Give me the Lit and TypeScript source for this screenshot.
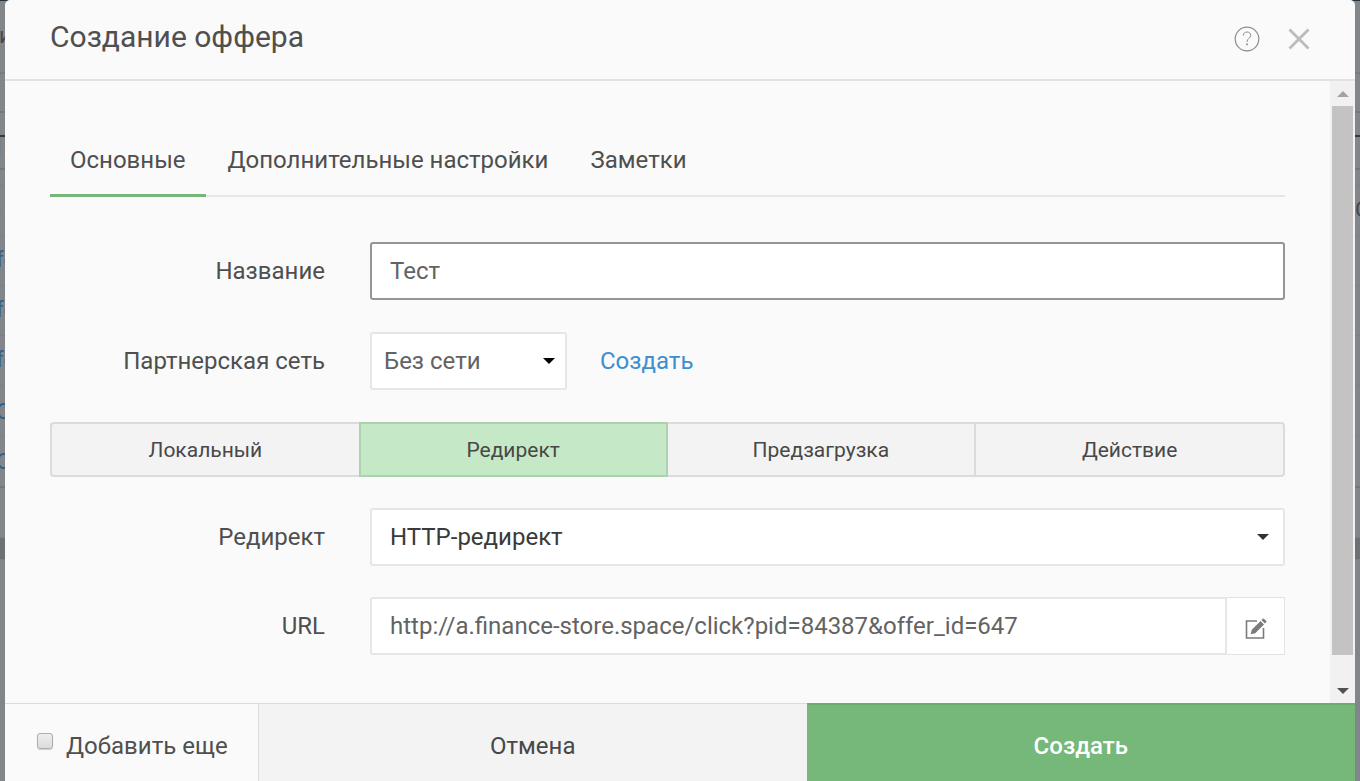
import { LitElement, html, css, svg } from "lit";
import { customElement, state } from "lit/decorators.js";

const caret = html`<svg class="caret" viewBox="0 0 12 6" width="12" height="6" aria-hidden="true">
  ${svg`<path d="M0 0h12L6 6z" fill="currentColor" />`}
</svg>`;

/** Table rows of the page that stays dimmed behind the dialog. */
const backdropRows = [
  { cls: "top", left: "и", right: "" },
  { cls: "nav", left: "", right: "" },
  { cls: "tools", left: "", right: "" },
  { cls: "tab", left: "П", right: "" },
  { cls: "gap", left: "", right: "" },
  { cls: "head", left: "е", right: "С" },
  { cls: "row", left: "fe", right: "" },
  { cls: "row", left: "fe", right: "" },
  { cls: "row", left: "fe", right: "" },
  { cls: "row round", left: "O", right: "" },
  { cls: "row round last", left: "O", right: "" },
  { cls: "sum", left: "", right: "" },
  { cls: "total", left: "", right: "" },
];

@customElement("page-backdrop")
export class PageBackdrop extends LitElement {
  static styles = css`
    :host {
      display: block;
      height: 100%;
      overflow: hidden;
      background: #82868a;
      color: #45474a;
      font: 22px/24px Roboto, sans-serif;
      border-top: 1px solid #263340;
      box-sizing: border-box;
    }
    .line {
      display: flex;
      align-items: center;
      justify-content: space-between;
      box-sizing: border-box;
      height: 50px;
      padding-bottom: 2px;
      border-bottom: 1px solid #7c8084;
      color: #33608a;
    }
    .line span { margin-left: -4px; white-space: nowrap; }
    .round { padding: 2px 0 0; }
    .line .end { width: 5px; overflow: hidden; color: #45474a; }
    .top { height: 73px; color: #45474a; border-bottom: 2px solid #787c80; }
    .top span { margin-left: -1px; }
    .nav { height: 39px; border-bottom: 2px solid #74787c; }
    .tools { height: 24px; border-bottom: 2px solid #33373b; }
    .tab { height: 33px; border-bottom: 2px solid #74787c; align-items: flex-start; }
    .tab span { margin-left: -14px; }
    .gap { height: 16px; }
    .head { color: #66696d; }
    .head span { margin-left: -11px; }
    .last { height: 52px; border-bottom: 2px solid #74787c; }
    .sum { height: 50px; }
    .total { height: 22px; background: #6e7174; }
  `;

  render() {
    return backdropRows.map(
      (r) => html`<div class="line ${r.cls}"><span>${r.left}</span><div class="end">${r.right}</div></div>`
    );
  }
}

@customElement("app-root")
export class AppRoot extends LitElement {
  static styles = css`
    :host {
      display: block;
      position: relative;
      height: 100vh;
      overflow: hidden;
      font: 24px/32px Roboto, sans-serif;
      color: #4f4f4f;
    }
    *, *::before, *::after { box-sizing: border-box; }
    button, input, select { font: inherit; color: inherit; margin: 0; }
    button { cursor: pointer; }

    .dialog {
      position: absolute;
      inset: 0 5px;
      display: flex;
      flex-direction: column;
      background: #fafafa;
      border-radius: 5px 5px 0 0;
      overflow: hidden;
    }

    .header {
      display: flex;
      align-items: center;
      gap: 28px;
      padding: 16px 45px 21px;
      border-bottom: 2px solid #e2e2e2;
    }
    .title { flex: 1; margin: 0; font-size: 30px; line-height: 42px; font-weight: 400; }
    .icon-button { display: flex; padding: 4px 0 0; border: 0; background: none; color: #bcbcbc; }
    .help { color: #8c8c8c; }

    .body { flex: 1; min-height: 0; display: flex; }
    .content { flex: 1; min-width: 0; padding: 46px 45px 0; overflow: hidden; }

    .tabs { display: flex; gap: 2px; box-shadow: inset 0 -2px #e6e6e6; height: 70px; }
    .tab {
      padding: 0 20px 2px;
      border: 0;
      border-bottom: 3px solid transparent;
      background: none;
    }
    .tab.active { border-bottom-color: #74b779; }

    .form { display: grid; gap: 31px; margin-top: 45px; }
    .group { display: grid; gap: 32px; }
    .row {
      display: grid;
      grid-template-columns: 275px minmax(0, 1fr);
      column-gap: 45px;
      align-items: center;
    }
    .row > label { text-align: right; }
    .box {
      width: 100%;
      height: 58px;
      padding: 0 18px;
      border: 2px solid #e6e6e6;
      border-radius: 3px;
      background: #fff;
      color: #636363;
      outline: none;
    }
    .box.strong { border-color: #959595; }
    .inline { display: flex; align-items: center; gap: 33px; }
    .select { display: grid; align-items: center; }
    .select > * { grid-area: 1 / 1; }
    .select .box { appearance: none; color: #3a3a3a; }
    .select .caret { justify-self: end; margin-right: 16px; pointer-events: none; color: #333; }
    .network { width: 197px; }
    .network .box { padding: 0 12px; color: #636363; }
    .network .caret { margin-right: 12px; color: #000; }
    .link { color: #3d8fd1; text-decoration: none; }

    .segments { display: grid; grid-template-columns: repeat(4, 1fr); font-size: 21px; color: #484848; }
    .segment {
      height: 55px;
      border: 2px solid #dbdbdb;
      border-left-width: 0;
      background: #f3f3f3;
    }
    .segment:first-child { border-left-width: 2px; border-right-width: 0; border-radius: 4px 0 0 4px; }
    .segment:last-child { border-radius: 0 4px 4px 0; }
    .segment.active { border: 2px solid #acd2af; background: #c5e9c7; }

    .url { display: flex; }
    .url .box { flex: 1; min-width: 0; border-radius: 3px 0 0 3px; }
    .edit {
      display: grid;
      place-items: center;
      width: 58px;
      padding: 5px 0 0;
      border: 1px solid #e2e2e2;
      border-left: 0;
      background: #fff;
      color: #7b7b7b;
    }

    .scrollbar {
      width: 25px;
      padding: 0 2px;
      display: flex;
      flex-direction: column;
      background: #f1f1f1;
    }
    .arrow { display: grid; place-items: center; height: 25px; color: #505050; }
    .arrow.up { color: #a3a3a3; }
    .arrow.up .caret { transform: rotate(180deg); }
    .track { flex: 1; }
    .thumb { height: 96%; background: #c3c3c3; }

    .footer { display: grid; grid-template-columns: 253px 1fr 1fr; height: 78px; }
    .again {
      display: flex;
      align-items: center;
      gap: 13px;
      padding: 6px 0 0 32px;
      border-top: 1px solid #dcdcdc;
    }
    .check {
      appearance: none;
      width: 16px;
      height: 16px;
      margin-bottom: 9px;
      border: 1px solid #adadad;
      border-radius: 3px;
      background: linear-gradient(#ededed, #dcdcdc);
      box-shadow: 0 1px 1px #d0d0d0;
    }
    .check:checked { background: #74b779; }
    .action { padding: 6px 0 0; border: 0; border-top: 1px solid #dcdcdc; background: #f3f3f3; color: #484848; }
    .cancel { border-left: 1px solid #dcdcdc; }
    .create { border-top: 2px solid #6bad70; background: #76b77a; color: #fff; font-weight: 500; }
  `;

  @state() private tab = 0;
  @state() private kind = 1;

  private tabs = ["Основные", "Дополнительные настройки", "Заметки"];
  private kinds = ["Локальный", "Редирект", "Предзагрузка", "Действие"];

  render() {
    return html`
      <page-backdrop aria-hidden="true"></page-backdrop>
      <section class="dialog" role="dialog" aria-labelledby="title">
        <header class="header">
          <h1 class="title" id="title">Создание оффера</h1>
          <button class="icon-button help" aria-label="Справка">
            <svg width="26" height="26" viewBox="0 0 26 26" fill="none" stroke="currentColor">
              <circle cx="13" cy="13" r="11.8" stroke-width="1.2" />
              <path d="M9.3 9.6c0-2.2 1.6-3.6 3.7-3.6s3.7 1.4 3.7 3.3c0 3-3.6 3.2-3.6 6.2v.6" stroke-width="1" />
              <path d="M12.2 17.6h1.7v1.6h-1.7z" fill="currentColor" stroke="none" />
            </svg>
          </button>
          <button class="icon-button" aria-label="Закрыть">
            <svg width="22" height="22" viewBox="0 0 22 22" fill="none" stroke="currentColor" stroke-width="2.8">
              <path d="M1.5 1.5l19 19M20.5 1.5l-19 19" />
            </svg>
          </button>
        </header>

        <div class="body">
          <div class="content">
            <nav class="tabs" role="tablist">
              ${this.tabs.map(
                (t, i) => html`<button
                  class="tab ${i === this.tab ? "active" : ""}"
                  role="tab"
                  aria-selected=${i === this.tab}
                  @click=${() => (this.tab = i)}
                >${t}</button>`
              )}
            </nav>
            <form class="form" @submit=${(e: Event) => e.preventDefault()}>
              <div class="group">
                <div class="row">
                  <label for="name">Название</label>
                  <input class="box strong" id="name" type="text" value="Тест" />
                </div>
                <div class="row">
                  <label for="network">Партнерская сеть</label>
                  <div class="inline">
                    <div class="select network">
                      <select class="box" id="network"><option>Без сети</option></select>
                      ${caret}
                    </div>
                    <a class="link" href="#">Создать</a>
                  </div>
                </div>
                <div class="segments">
                  ${this.kinds.map(
                    (k, i) => html`<button
                      type="button"
                      class="segment ${i === this.kind ? "active" : ""}"
                      aria-pressed=${i === this.kind}
                      @click=${() => (this.kind = i)}
                    >${k}</button>`
                  )}
                </div>
              </div>
              <div class="row">
                <label for="redirect">Редирект</label>
                <div class="select">
                  <select class="box" id="redirect"><option>HTTP-редирект</option></select>
                  ${caret}
                </div>
              </div>
              <div class="row">
                <label for="url">URL</label>
                <div class="url">
                  <input class="box" id="url" type="text" value="http://a.finance-store.space/click?pid=84387&offer_id=647" />
                  <button type="button" class="edit" aria-label="Редактировать">
                    <svg width="22" height="22" viewBox="0 0 22 22" aria-hidden="true">
                      <path d="M12 3H1.5v17h17v-10" fill="none" stroke="currentColor" stroke-width="1.6" />
                      <path d="M5.6 16.2l1.2-4.4 8.8-8.8 3.4 3.4-8.8 8.8zM16.5 2.1l1.4-1.4q.5-.4 1 0l2.4 2.4q.4.5 0 1l-1.4 1.4z" fill="currentColor" />
                    </svg>
                  </button>
                </div>
              </div>
            </form>
          </div>
          <div class="scrollbar" aria-hidden="true">
            <div class="arrow up">${caret}</div>
            <div class="track"><div class="thumb"></div></div>
            <div class="arrow">${caret}</div>
          </div>
        </div>

        <footer class="footer">
          <label class="again"><input class="check" type="checkbox" />Добавить еще</label>
          <button class="action cancel">Отмена</button>
          <button class="action create">Создать</button>
        </footer>
      </section>
    `;
  }
}
